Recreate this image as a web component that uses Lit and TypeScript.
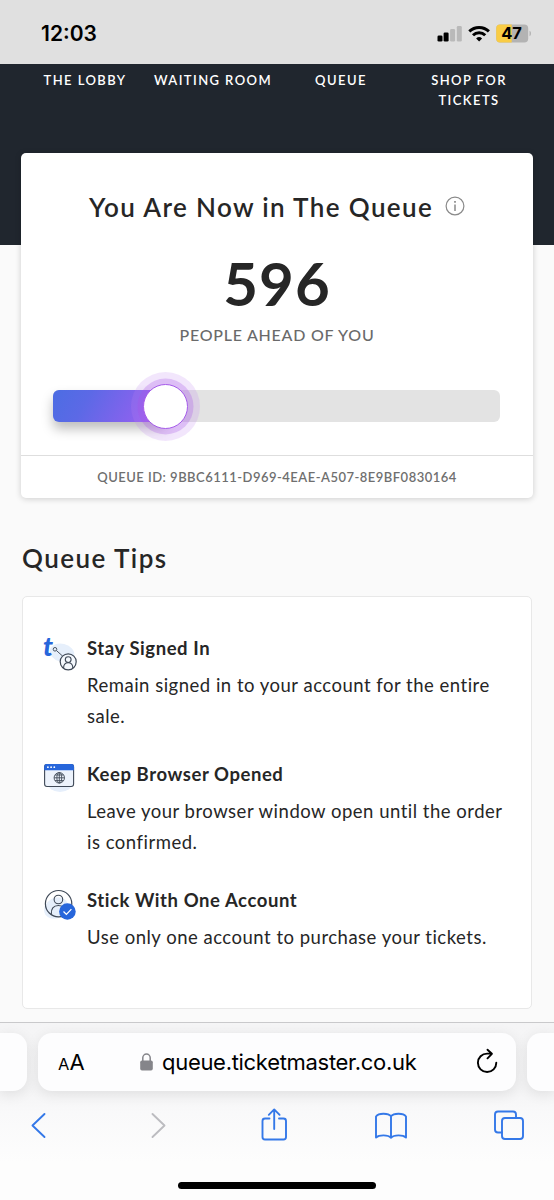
import { LitElement, html, css, svg } from "lit";
import { customElement, property } from "lit/decorators.js";

const stayIcon = svg`<g transform="translate(0 2.3)">
  <ellipse cx="19" cy="13.5" rx="12.5" ry="9" transform="rotate(14 19 13.5)" fill="#e6effb"/>
  <circle cx="12" cy="10" r="1.8" fill="none" stroke="#4b5563" stroke-width="1"/>
  <path d="M13.5 11.3L19.500 16.700" stroke="#4b5563" stroke-width="1" fill="none"/>
  <circle cx="25.200" cy="22.500" r="8" fill="#f4f8fd" stroke="#3f4957" stroke-width="1.200"/>
  <circle cx="25.200" cy="20.300" r="2.900" fill="none" stroke="#3f4957" stroke-width="1.100"/>
  <path d="M20.600 28.600c0-3.400 1.800-5.200 4.600-5.200s4.600 1.800 4.600 5.200" fill="none" stroke="#3f4957" stroke-width="1.100"/>
  <text class="tee" x="0" y="16.200">t</text></g>`;

const browserIcon = svg`<g transform="translate(0 -0.5)">
  <ellipse cx="17" cy="20" rx="12.500" ry="9.500" fill="#e6effb"/>
  <rect x="1.600" y="2" width="29" height="22" rx="2.400" fill="#edf3fc" stroke="#3f4957" stroke-width="1.100"/>
  <path d="M1.200 7.800V4a2.400 2.400 0 0 1 2.400-2.400h25A2.400 2.400 0 0 1 31 4v3.800z" fill="#2766db"/>
  <g fill="#fff"><circle cx="4.900" cy="4.700" r=".9"/><circle cx="8.100" cy="4.700" r=".9"/><circle cx="11.300" cy="4.700" r=".9"/></g>
  <g fill="none" stroke="#3f4957" stroke-width=".9"><circle cx="16.300" cy="15.300" r="5.200"/><ellipse cx="16.300" cy="15.300" rx="2.400" ry="5.200"/><path d="M16.300 10.100v10.400M11.100 15.300h10.400M12 12.500h8.600M12 18.100h8.600"/></g></g>`;

const accountIcon = svg`
  <ellipse cx="13" cy="19" rx="12.500" ry="10" transform="rotate(-30 13 19)" fill="#e6effb"/>
  <circle cx="15.600" cy="14.700" r="13.200" fill="none" stroke="#3f4957" stroke-width="1.200"/>
  <circle cx="15.400" cy="10.500" r="4.300" fill="none" stroke="#3f4957" stroke-width="1.100"/>
  <path d="M8.300 25.500c-.4-5.800 2-9 7.100-9s7.500 3.200 7.100 9" fill="none" stroke="#3f4957" stroke-width="1.100"/>
  <circle cx="24.400" cy="22.500" r="8.300" fill="#2766db"/>
  <path d="M20.500 22.500l2.900 2.900 5-5.300" fill="none" stroke="#fff" stroke-width="1.300"/>`;

const tips = [
  { icon: stayIcon, title: "Stay Signed In", text: "Remain signed in to your account for the entire sale." },
  { icon: browserIcon, title: "Keep Browser Opened", text: "Leave your browser window open until the order is confirmed." },
  { icon: accountIcon, title: "Stick With One Account", text: "Use only one account to purchase your tickets." },
];

@customElement("status-bar")
class StatusBar extends LitElement {
  static styles = css`
    :host { display: flex; align-items: center; justify-content: space-between; box-sizing: border-box; height: 64px; padding: 3px 23.5px 0 41px; background: #e0e0e0; color: #000; font: 600 21px/30px Inter, sans-serif; }
    .icons { display: block; }
    .pct { font: 700 16.5px Inter, sans-serif; letter-spacing: -0.2px; }
  `;
  render() {
    return html`<span>12:03</span>
      <svg class="icons" width="94" height="22" viewBox="0 0 94 22">
        <rect x="0.500" y="12.500" width="5" height="6" rx="1.300"/>
        <rect x="6.600" y="9.500" width="5" height="9" rx="1.300"/>
        <rect x="13.100" y="6" width="5" height="12.500" rx="1.300" fill="#b9b9b9"/>
        <rect x="19.800" y="3" width="5" height="15.500" rx="1.300" fill="#b9b9b9"/>
        <g fill="none" stroke="#000" stroke-width="3">
          <path d="M32.300 8.300a14.200 14.200 0 0 1 19.600 0"/>
          <path d="M36 12.200a8.700 8.700 0 0 1 12.200 0"/>
        </g>
        <path d="M42.100 18.600l-3-3.200a4.400 4.400 0 0 1 6 0z"/>
        <rect x="59.200" y="1.500" width="32" height="18" rx="4" fill="#b3b3b3"/>
        <path d="M63.200 1.500h11.500v18H63.200a4 4 0 0 1-4-4v-10a4 4 0 0 1 4-4z" fill="#f9cc45"/>
        <path d="M92.500 7.800c2 .8 2 4.600 0 5.400z" fill="#b3b3b3"/>
        <text class="pct" x="74.500" y="16.300" text-anchor="middle">47</text>
      </svg>`;
  }
}

@customElement("queue-progress")
class QueueProgress extends LitElement {
  @property({ type: Number }) value = 25;
  static styles = css`
    :host { display: block; height: 32px; border-radius: 6px; background: #e3e3e3; }
    .fill { position: relative; height: 32px; border-radius: 6px 0 0 6px; background: linear-gradient(118deg, #4c6de3 0%, #5c69e6 30%, #8a62ee 75%, #a95df2 100%); box-shadow: 0 7px 12px rgba(0, 0, 0, 0.26); }
    .knob { position: absolute; right: -23px; top: -6px; width: 45px; height: 45px; border: 1px solid #a55bea; box-sizing: border-box; border-radius: 50%; background: #fff; box-shadow: 0 0 0 5.5px rgba(165, 80, 230, 0.27), 0 0 0 12px rgba(190, 130, 240, 0.2); }
  `;
  render() {
    return html`<div class="fill" style="width:${this.value}%"><div class="knob"></div></div>`;
  }
}

@customElement("browser-bar")
class BrowserBar extends LitElement {
  static styles = css`
    :host { display: flex; flex-direction: column; height: 178px; box-sizing: border-box; border-top: 1px solid #c9c9cb; background: linear-gradient(#f5f5f6 0, #f4f4f5 66px, #f9f9fa 90px, #fdfdfd 140px); overflow: hidden; font-family: Inter, sans-serif; }
    .tabs { display: grid; grid-template-columns: 27px 478px 27px; column-gap: 11px; padding-top: 10px; }
    .pill { height: 58px; border-radius: 14px; background: #fdfdfe; box-shadow: 0 3px 14px rgba(0, 0, 0, 0.09); display: flex; align-items: center; box-sizing: border-box; }
    .prev { border-radius: 0 14px 14px 0; }
    .next { border-radius: 14px 0 0 14px; }
    .main { padding: 0 17px 0 20px; color: #000; }
    .aa { width: 81px; font-size: 16.5px; }
    .big { font-size: 22px; }
    .lock { margin-right: 8px; }
    .url { font-size: 22px; white-space: nowrap; flex: 1; letter-spacing: -0.3px; }
    .tools { display: grid; grid-template-columns: repeat(5, 40px); justify-content: space-between; padding: 13.5px 24px 0 18px; }
    .home { width: 198px; height: 7px; border-radius: 4px; background: #000; margin: auto auto 11px 178px; }
    svg { display: block; }
  `;
  render() {
    return html`
      <div class="tabs">
        <div class="pill prev"></div>
        <div class="pill main">
          <span class="aa">A<span class="big">A</span></span>
          <svg class="lock" width="15" height="20" viewBox="0 0 15 20"><rect x="1.200" y="8.500" width="12.600" height="10" rx="1.800" fill="#85858a"/><path d="M3.800 9V5.800a3.700 3.700 0 0 1 7.400 0V9" fill="none" stroke="#85858a" stroke-width="1.500"/></svg>
          <span class="url">queue.ticketmaster.co.uk</span>
          <svg width="24" height="28" viewBox="0 0 24 28" fill="none" stroke="#000" stroke-width="1.900" stroke-linecap="round" stroke-linejoin="round"><path d="M21.300 14.800a9.200 9.200 0 1 1-9.200-9.200h4.200M12.500 1.700l4.400 4.100-4.400 4.500"/></svg>
        </div>
        <div class="pill next"></div>
      </div>
      <div class="tools">
        ${[
          svg`<path d="M26.500 9L14.500 20.500 26.500 32"/>`,
          svg`<path d="M16.500 9L28.500 20.500 16.500 32" stroke="#bcbcc0"/>`,
          svg`<path d="M15.500 13.500H11a2.500 2.500 0 0 0-2.500 2.500v16a2.500 2.500 0 0 0 2.500 2.500h18.500A2.500 2.500 0 0 0 32 32V16a2.500 2.500 0 0 0-2.500-2.500H25M20.200 24V4.500M14.800 9.800l5.400-5.400 5.400 5.400"/>`,
          svg`<path d="M19 11.200c-2.500-3-12-3.800-15 .3v21c3-2.800 12-3 15 .3 3-3.300 12-3.100 15-.3v-21c-3-4.100-12.500-3.300-15-.3zv21.600"/>`,
          svg`<rect x="12" y="13" width="21" height="21" rx="3"/><path d="M12 27.500H8a3 3 0 0 1-3-3V9.500a3 3 0 0 1 3-3h15a3 3 0 0 1 3 3V13"/>`,
        ].map((g) => html`<svg width="40" height="40" viewBox="0 0 40 40" fill="none" stroke="#3478e8" stroke-width="1.900" stroke-linecap="round" stroke-linejoin="round">${g}</svg>`)}
      </div>
      <div class="home"></div>`;
  }
}

@customElement("app-root")
class AppRoot extends LitElement {
  static styles = css`
    :host { display: flex; flex-direction: column; height: 1200px; overflow: hidden; background: #fafafa; color: #262626; font-family: Lato, sans-serif; }
    .steps { display: grid; grid-template-columns: repeat(4, 128px); align-content: start; height: 181px; box-sizing: border-box; padding: 6px 21px 0; background: #20262e; color: #fff; text-align: center; font-weight: 600; font-size: 13px; line-height: 20px; letter-spacing: 1.42px; }
    .card { width: 512px; height: 345px; box-sizing: border-box; margin: -92px auto 0 21px; background: #fff; border-radius: 5px; box-shadow: 0 1px 6px rgba(0, 0, 0, 0.18); display: flex; flex-direction: column; flex: none; position: relative; }
    .top { display: flex; align-items: center; padding: 34px 0 0 68px; height: 40px; }
    .title { white-space: nowrap; font-weight: 600; font-size: 26px; line-height: 40px; letter-spacing: 1.38px; }
    .info { margin: -3px 0 0 12px; }
    .count { text-align: center; font-weight: 700; font-size: 60px; line-height: 72px; margin-top: 20px; letter-spacing: 1px; }
    .ahead { text-align: center; font-weight: 500; font-size: 16px; line-height: 24px; margin-top: 4px; color: #6a6a6a; letter-spacing: 0.75px; }
    queue-progress { margin: 43.4px 33px 0 32px; }
    .qid { margin-top: auto; height: 42px; border-top: 1px solid #dedede; text-align: center; line-height: 42px; font-weight: 600; font-size: 13px; color: #6f6f6f; letter-spacing: 0.48px; }
    .h2 { margin: 40px 0 0 22px; line-height: 40px; font-weight: 600; font-size: 26px; letter-spacing: 1.45px; }
    .tips { box-sizing: border-box; margin: 18px 22px 0; height: 413px; flex: none; border: 1px solid #e8e8e8; border-radius: 5px; background: #fff; padding: 36px 20px 0 20px; display: flex; flex-direction: column; gap: 27px; }
    .tip { display: grid; grid-template-columns: 44px 1fr; }
    .ico { display: block; margin-top: 4px; overflow: visible; }
    .tee { font: italic 900 27px Lato, sans-serif; fill: #2766db; }
    .tt { font-weight: 700; font-size: 18.5px; line-height: 30px; letter-spacing: 0.57px; }
    .tb { font-size: 18.5px; line-height: 31px; margin-top: 7px; letter-spacing: 0.5px; }
    browser-bar { margin-top: auto; flex: none; }
  `;
  render() {
    return html`
      <status-bar></status-bar>
      <div class="steps"><span>THE LOBBY</span><span>WAITING ROOM</span><span>QUEUE</span><span>SHOP FOR<br />TICKETS</span></div>
      <div class="card">
        <div class="top"><span class="title">You Are Now in The Queue</span>
          <svg class="info" width="20" height="20" viewBox="0 0 20 20" fill="none" stroke="#8a8a8a" stroke-width="1.200"><circle cx="10" cy="10" r="8.900"/><path d="M10 8.500v6.500" stroke-width="1.500"/><path d="M10 5v1.800" stroke-width="1.700"/></svg></div>
        <div class="count">596</div>
        <div class="ahead">PEOPLE AHEAD OF YOU</div>
        <queue-progress></queue-progress>
        <div class="qid">QUEUE ID: 9BBC6111-D969-4EAE-A507-8E9BF0830164</div>
      </div>
      <div class="h2">Queue Tips</div>
      <div class="tips">
        ${tips.map((t) => html`<div class="tip"><svg class="ico" width="33" height="33" viewBox="0 0 33 33">${t.icon}</svg><div><div class="tt">${t.title}</div><div class="tb">${t.text}</div></div></div>`)}
      </div>
      <browser-bar></browser-bar>`;
  }
}
